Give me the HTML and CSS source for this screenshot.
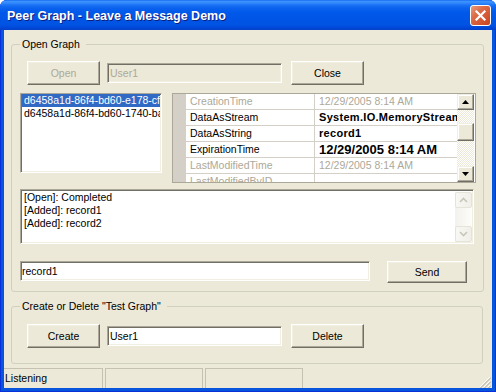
FILE: index.html
```html
<!DOCTYPE html>
<html lang="en">
<head>
    <meta charset="UTF-8">
    <meta name="viewport" content="width=device-width, initial-scale=1.0">
    <title>Peer Graph - Leave a Message Demo</title>
    <link rel="stylesheet" href="styles.css">
</head>
<body>

    <div class="window">
        <div class="titlebar">
            <span class="title">Peer Graph - Leave a Message Demo</span>
            <span class="close-btn">
                <svg width="13" height="13" viewBox="0 0 13 13"><path d="M2.5 2.5 L10.5 10.5 M10.5 2.5 L2.5 10.5" stroke="#fff" stroke-width="2.2" stroke-linecap="square"/></svg>
            </span>
        </div>

        <div class="client">
            <!-- Open Graph -->
            <fieldset class="group group-open">
                <legend>Open Graph</legend>
                <div class="row row-buttons">
                    <button class="btn" disabled>Open</button>
                    <input class="textbox textbox-short" type="text" value="User1" disabled>
                    <button class="btn btn-right">Close</button>
                </div>

                <div class="row row-lists">
                    <div class="listbox">
                        <div class="list-item selected">d6458a1d-86f4-bd60-e178-cf2a90b4e6d1</div>
                        <div class="list-item">d6458a1d-86f4-bd60-1740-ba31c7e9f052</div>
                    </div>

                    <div class="propgrid">
                        <div class="prop-rows">
                            <div class="prop-row readonly">
                                <span class="prop-margin"></span>
                                <span class="prop-name">CreationTime</span>
                                <span class="prop-value">12/29/2005 8:14 AM</span>
                            </div>
                            <div class="prop-row">
                                <span class="prop-margin"></span>
                                <span class="prop-name">DataAsStream</span>
                                <span class="prop-value bold">System.IO.MemoryStream</span>
                            </div>
                            <div class="prop-row">
                                <span class="prop-margin"></span>
                                <span class="prop-name">DataAsString</span>
                                <span class="prop-value bold">record1</span>
                            </div>
                            <div class="prop-row">
                                <span class="prop-margin"></span>
                                <span class="prop-name">ExpirationTime</span>
                                <span class="prop-value bold big">12/29/2005 8:14 AM</span>
                            </div>
                            <div class="prop-row readonly">
                                <span class="prop-margin"></span>
                                <span class="prop-name">LastModifiedTime</span>
                                <span class="prop-value">12/29/2005 8:14 AM</span>
                            </div>
                            <div class="prop-row readonly">
                                <span class="prop-margin"></span>
                                <span class="prop-name">LastModifiedByID</span>
                                <span class="prop-value"></span>
                            </div>
                        </div>
                        <div class="vscroll">
                            <div class="sb-btn">
                                <svg width="7" height="4" viewBox="0 0 7 4"><path d="M3.5 0 L7 4 L0 4 Z" fill="#000"/></svg>
                            </div>
                            <div class="sb-track"><div class="sb-thumb"></div></div>
                            <div class="sb-btn">
                                <svg width="7" height="4" viewBox="0 0 7 4"><path d="M0 0 L7 0 L3.5 4 Z" fill="#000"/></svg>
                            </div>
                        </div>
                    </div>
                </div>

                <div class="log">
                    <div class="log-text">
                        <div>[Open]: Completed</div>
                        <div>[Added]: record1</div>
                        <div>[Added]: record2</div>
                    </div>
                    <div class="log-scroll">
                        <div class="ls-btn">
                            <svg width="9" height="6" viewBox="0 0 9 6"><path d="M1 5 L4.5 1.5 L8 5" fill="none" stroke="#C8C6BA" stroke-width="1.6"/></svg>
                        </div>
                        <div class="ls-track"></div>
                        <div class="ls-btn">
                            <svg width="9" height="6" viewBox="0 0 9 6"><path d="M1 1 L4.5 4.5 L8 1" fill="none" stroke="#C8C6BA" stroke-width="1.6"/></svg>
                        </div>
                    </div>
                </div>

                <div class="row row-send">
                    <input class="textbox textbox-long" type="text" value="record1">
                    <button class="btn btn-send">Send</button>
                </div>
            </fieldset>

            <!-- Create or Delete -->
            <fieldset class="group group-create">
                <legend>Create or Delete "Test Graph"</legend>
                <div class="row row-buttons">
                    <button class="btn">Create</button>
                    <input class="textbox textbox-short" type="text" value="User1">
                    <button class="btn btn-right">Delete</button>
                </div>
            </fieldset>

            <div class="statusbar">
                <div class="panel panel-first">Listening</div>
                <div class="panel"></div>
                <div class="panel"></div>
                <svg class="grip" width="12" height="12" viewBox="0 0 12 12">
                    <path d="M11 1 L1 11 M11 5 L5 11 M11 9 L9 11" stroke="#fff" stroke-width="1"/>
                    <path d="M12 1.5 L1.5 12 M12 5.5 L5.5 12 M12 9.5 L9.5 12" stroke="#ACA899" stroke-width="1"/>
                </svg>
            </div>
        </div>
    </div>

</body>
</html>
```

FILE: styles.css
```css
body {
    margin: 0;
    background-color: #fff;
    font-family: "Liberation Sans", Arial, sans-serif;
    font-size: 10.5px;
    color: #000;
}

.window {
    width: 496px;
    height: 392px;
    display: flex;
    flex-direction: column;
    background-color: #0855DD;
    border-radius: 7px 7px 0 0;
    overflow: hidden;
    box-shadow: inset 0 0 0 1px #0831D9;
}

.titlebar {
    height: 30px;
    flex: none;
    display: flex;
    align-items: center;
    padding: 0 5px 0 7px;
    background: linear-gradient(to bottom, #0A5DEB 0px, #3D95FF 1px, #3489FB 3px, #1A73F5 5px, #0B62EE 8px, #0058E9 13px, #0055E6 20px, #0053E3 25px, #0046D5 28px, #0741C7 30px);
}

.title {
    flex: 1;
    color: #fff;
    font-weight: bold;
    font-size: 12.5px;
    text-shadow: 1px 1px #0F1E7D;
    padding-top: 1px;
}

.close-btn {
    width: 21px;
    height: 21px;
    box-sizing: border-box;
    border: 1px solid #fff;
    border-radius: 3px;
    background: linear-gradient(135deg, #E99B7E 0%, #DD6C48 35%, #C9431E 100%);
    display: flex;
    align-items: center;
    justify-content: center;
    margin-top: 1px;
}

.client {
    flex: 1;
    margin: 0 4px 4px;
    background-color: #ECE9D8;
    display: flex;
    flex-direction: column;
}

/* group boxes */
.group {
    margin: 8px 8px 0 7px;
    padding: 10px 7px 8px 8px;
    border: 1px solid #D0D0BF;
    border-radius: 3px;
    min-width: 0;
}

.group legend {
    padding: 0 6px 0 2px;
    line-height: 13px;
}

.group-create {
    margin-right: 9px;
    padding-top: 11px;
    padding-bottom: 15px;
}

.row {
    display: flex;
}

.row-buttons {
    margin-left: 7px;
    align-items: center;
}

/* controls */
.btn {
    appearance: none;
    box-sizing: border-box;
    width: 73px;
    height: 24px;
    margin: 0;
    padding: 0;
    font: inherit;
    color: #000;
    background-color: #ECE9D8;
    border: 1px solid;
    border-color: #fff #716F64 #716F64 #fff;
    box-shadow: inset -1px -1px #ACA899, inset 1px 1px #F1EFE2;
}

.btn:disabled {
    color: #ACA899;
}

.btn-right {
    margin-left: 9px;
}

.btn-send {
    width: 80px;
    height: 22px;
    margin-left: 17px;
}

.textbox {
    appearance: none;
    box-sizing: border-box;
    height: 20px;
    margin: 0;
    padding: 0 2px;
    font: inherit;
    color: #000;
    background-color: #fff;
    border: 1px solid;
    border-color: #ACA899 #fff #fff #ACA899;
    box-shadow: inset 1px 1px #716F64, inset -1px -1px #F1EFE2;
    outline: none;
}

.textbox:disabled {
    color: #ACA899;
    background-color: #ECE9D8;
}

.textbox-short {
    width: 175px;
    margin-left: 7px;
}

.textbox-long {
    width: 350px;
    padding-left: 1px;
}

/* list and property grid */
.row-lists {
    margin-top: 8px;
    gap: 10px;
}

.listbox {
    box-sizing: border-box;
    width: 142px;
    height: 80px;
    background-color: #fff;
    border: 1px solid;
    border-color: #ACA899 #fff #fff #ACA899;
    box-shadow: inset 1px 1px #716F64, inset -1px -1px #F1EFE2;
    padding: 0 1px 1px 1px;
    overflow: hidden;
}

.list-item {
    line-height: 13px;
    padding-left: 2px;
    white-space: nowrap;
    overflow: hidden;
}

.list-item.selected {
    background-color: #316AC5;
    color: #fff;
}

.propgrid {
    box-sizing: border-box;
    width: 304px;
    height: 90px;
    display: flex;
    background-color: #fff;
    border: 1px solid #ACA899;
}

.prop-rows {
    flex: 1;
    overflow: hidden;
}

.prop-row {
    display: flex;
    height: 16px;
    line-height: 15px;
    white-space: nowrap;
}

.prop-margin {
    width: 13px;
    flex: none;
    background-color: #D4D0C8;
}

.prop-name,
.prop-value {
    box-sizing: border-box;
    padding-left: 4px;
    border-bottom: 1px solid #D4D0C8;
    overflow: hidden;
}

.prop-name {
    width: 128px;
    flex: none;
}

.prop-value {
    flex: 1;
    border-left: 1px solid #D4D0C8;
}

.readonly .prop-name,
.readonly .prop-value {
    color: #ACA899;
}

.bold {
    font-weight: bold;
    font-size: 11px;
    letter-spacing: 0.3px;
}

.big {
    font-size: 13px;
    letter-spacing: 0;
}

.vscroll {
    width: 17px;
    margin-right: 1px;
    display: flex;
    flex-direction: column;
}

.sb-btn,
.sb-thumb {
    box-sizing: border-box;
    background-color: #ECE9D8;
    border: 1px solid;
    border-color: #F1EFE2 #716F64 #716F64 #F1EFE2;
    box-shadow: inset -1px -1px #ACA899, inset 1px 1px #fff;
}

.sb-btn {
    height: 16px;
    display: flex;
    align-items: center;
    justify-content: center;
}

.sb-track {
    flex: 1;
    background: repeating-conic-gradient(#fff 0 25%, #ECE9D8 0 50%) 0 0 / 2px 2px;
}

.sb-thumb {
    height: 18px;
    margin-top: 13px;
}

/* log */
.log {
    box-sizing: border-box;
    height: 55px;
    width: 454px;
    margin-top: 6px;
    display: flex;
    background-color: #fff;
    border: 1px solid;
    border-color: #ACA899 #fff #fff #ACA899;
    box-shadow: inset 1px 1px #716F64, inset -1px -1px #F1EFE2;
    padding: 2px 1px 1px 2px;
}

.log-text {
    flex: 1;
    line-height: 13px;
    padding-left: 1px;
    margin-top: -1px;
}

.log-scroll {
    width: 17px;
    display: flex;
    flex-direction: column;
    background: linear-gradient(to right, #F3F1EC, #FDFDFA);
}

.ls-btn {
    box-sizing: border-box;
    height: 16px;
    border: 1px solid #E6E4DA;
    border-radius: 2px;
    background: linear-gradient(to right, #F8F8F4, #F0EFE8);
    display: flex;
    align-items: center;
    justify-content: center;
}

.ls-track {
    flex: 1;
}

.row-send {
    margin-top: 17px;
}

/* status bar */
.statusbar {
    height: 20px;
    margin-top: auto;
    display: flex;
}

.panel {
    box-sizing: border-box;
    width: 98px;
    margin-left: 2px;
    border: 1px solid #C5C2B2;
    border-bottom: none;
    padding: 2px 0 0 1px;
    line-height: 15px;
}

.panel-first {
    width: 99px;
    margin-left: 0;
    border-left: none;
}

.grip {
    margin-left: auto;
    align-self: flex-end;
    margin-right: 1px;
}
```
